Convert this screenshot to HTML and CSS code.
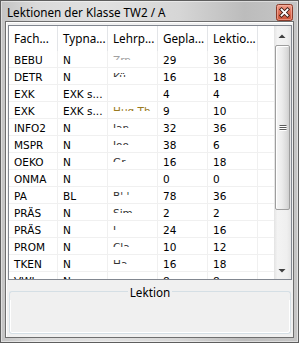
FILE: index.html
```html
<!DOCTYPE html>
<html lang="de">
<head>
<meta charset="utf-8">
<title>Lektionen der Klasse TW2 / A</title>
<link rel="stylesheet" href="styles.css">
</head>
<body>
<div class="window">
  <div class="titlebar">
    <span class="title">Lektionen der Klasse TW2 / A</span>
    <svg class="close" width="17" height="17" viewBox="0 0 17 17">
      <defs>
        <linearGradient id="cg" x1="0" y1="0" x2="0" y2="1">
          <stop offset="0" stop-color="#f0a491"/>
          <stop offset="0.45" stop-color="#e0735b"/>
          <stop offset="1" stop-color="#c94f33"/>
        </linearGradient>
      </defs>
      <rect x="0.5" y="0.5" width="16" height="16" rx="2" fill="url(#cg)" stroke="#8a3b2a"/>
      <rect x="1.5" y="1.5" width="14" height="14" rx="1.5" fill="none" stroke="#f6b8a8" stroke-opacity="0.6"/>
      <path d="M5.5 5.5 L11.5 11.5 M11.5 5.5 L5.5 11.5" stroke="#3b1a14" stroke-width="3.6" stroke-linecap="square"/>
      <path d="M5.5 5.5 L11.5 11.5 M11.5 5.5 L5.5 11.5" stroke="#ffffff" stroke-width="1.8" stroke-linecap="square"/>
    </svg>
  </div>
  <div class="client">
    <div class="list">
      <div class="grid">
        <div class="row head">
          <div class="c">Fach...</div>
          <div class="c">Typna...</div>
          <div class="c">Lehrp...</div>
          <div class="c">Gepla...</div>
          <div class="c">Lektio...</div>
          <div class="c fill"></div>
        </div>
        <div class="row"><div class="c">BEBU</div><div class="c">N</div><div class="c"><span class="mask faint">Zrn</span></div><div class="c">29</div><div class="c">36</div><div class="c fill"></div></div>
        <div class="row"><div class="c">DETR</div><div class="c">N</div><div class="c"><span class="mask">Kü</span></div><div class="c">16</div><div class="c">18</div><div class="c fill"></div></div>
        <div class="row"><div class="c">EXK</div><div class="c">EXK s...</div><div class="c"></div><div class="c">4</div><div class="c">4</div><div class="c fill"></div></div>
        <div class="row"><div class="c">EXK</div><div class="c">EXK s...</div><div class="c"><span class="mask warm">Hug Th</span></div><div class="c">9</div><div class="c">10</div><div class="c fill"></div></div>
        <div class="row"><div class="c">INFO2</div><div class="c">N</div><div class="c"><span class="mask">Jan</span></div><div class="c">32</div><div class="c">36</div><div class="c fill"></div></div>
        <div class="row"><div class="c">MSPR</div><div class="c">N</div><div class="c"><span class="mask">Joo</span></div><div class="c">38</div><div class="c">6</div><div class="c fill"></div></div>
        <div class="row"><div class="c">OEKO</div><div class="c">N</div><div class="c"><span class="mask">Gr</span></div><div class="c">16</div><div class="c">18</div><div class="c fill"></div></div>
        <div class="row"><div class="c">ONMA</div><div class="c">N</div><div class="c"></div><div class="c">0</div><div class="c">0</div><div class="c fill"></div></div>
        <div class="row"><div class="c">PA</div><div class="c">BL</div><div class="c"><span class="mask">B' '</span></div><div class="c">78</div><div class="c">36</div><div class="c fill"></div></div>
        <div class="row"><div class="c">PRÄS</div><div class="c">N</div><div class="c"><span class="mask">Sim</span></div><div class="c">2</div><div class="c">2</div><div class="c fill"></div></div>
        <div class="row"><div class="c">PRÄS</div><div class="c">N</div><div class="c"><span class="mask">L</span></div><div class="c">24</div><div class="c">16</div><div class="c fill"></div></div>
        <div class="row"><div class="c">PROM</div><div class="c">N</div><div class="c"><span class="mask">Cla</span></div><div class="c">10</div><div class="c">12</div><div class="c fill"></div></div>
        <div class="row"><div class="c">TKEN</div><div class="c">N</div><div class="c"><span class="mask">Ha</span></div><div class="c">16</div><div class="c">18</div><div class="c fill"></div></div>
        <div class="row last"><div class="c">VWL</div><div class="c">N</div><div class="c"></div><div class="c">8</div><div class="c">8</div><div class="c fill"></div></div>
      </div>
      <div class="scrollbar">
        <div class="sb-btn">
          <svg width="17" height="17" viewBox="0 0 17 17"><path d="M4.5 12 L11.5 12 L8 8.5 Z" fill="#3f3f3f"/></svg>
        </div>
        <div class="sb-track">
          <div class="thumb">
            <svg width="8" height="6" viewBox="0 0 8 6">
              <path d="M0.5 0.5 H7.5 M0.5 2.5 H7.5 M0.5 4.5 H7.5" stroke="#5a5a5a" stroke-width="1"/>
              <path d="M0.5 1.5 H7.5 M0.5 3.5 H7.5 M0.5 5.5 H7.5" stroke="#ffffff" stroke-width="1"/>
            </svg>
          </div>
        </div>
        <div class="sb-btn">
          <svg width="17" height="17" viewBox="0 0 17 17"><path d="M4.5 7 L11.5 7 L8 10.5 Z" fill="#3f3f3f"/></svg>
        </div>
      </div>
    </div>
    <div class="group">
      <div class="group-head"><span class="group-label">Lektion</span></div>
      <div class="group-body"></div>
    </div>
  </div>
</div>
</body>
</html>
```

FILE: styles.css
```css
* { box-sizing: border-box; }

html, body {
  margin: 0;
  padding: 0;
  background: #d0d0d0;
}

.window {
  width: 299px;
  height: 343px;
  display: flex;
  flex-direction: column;
  border: 1px solid #5e5e5e;
  background:
    linear-gradient(to right, #c4c4c4 0%, #dadada 12%, #e1e1e1 35%, #d6d6d6 60%, #bcbcbc 82%, #c6c6c6 100%);
  box-shadow: inset 0 0 0 1px rgba(255, 255, 255, 0.45);
}

.titlebar {
  height: 20px;
  flex: none;
  display: flex;
  align-items: flex-start;
  padding-left: 6px;
}

.title {
  flex: 1;
  font-family: "Noto Sans", sans-serif;
  font-size: 11.7px;
  line-height: 20px;
  padding-top: 1px;
  color: #000;
  white-space: nowrap;
}

.close {
  display: block;
  margin-top: 3px;
  margin-right: 5px;
}

.client {
  flex: 1;
  margin: 0 4px 4px 4px;
  border: 1px solid #6e6e6e;
  background: #f0f0f0;
  box-shadow: inset 1px 1px 0 #ffffff;
  display: flex;
  flex-direction: column;
  padding-top: 3px;
}

.list {
  height: 255px;
  flex: none;
  margin: 0 1px 0 2px;
  border: 1px solid #828790;
  background: #ffffff;
  display: flex;
}

.grid {
  width: 265px;
  height: 253px;
  overflow: hidden;
  display: flex;
  flex-direction: column;
}

.row {
  display: grid;
  grid-template-columns: 49px 50px 50px 50px 50px 16px;
  height: 17px;
  flex: none;
  border-bottom: 1px solid #f0f0f0;
}

.row.last {
  height: 7px;
  border-bottom: none;
}

.row .c {
  border-right: 1px solid #f0f0f0;
  padding: 2px 0 0 5px;
  font-family: "DejaVu Sans", sans-serif;
  font-size: 10.5px;
  line-height: 14px;
  color: #000;
  white-space: nowrap;
  overflow: hidden;
}

.row .c.fill {
  border-right: none;
}

.row.head {
  height: 25px;
  border-bottom: none;
}

.row.head .c {
  padding: 0 0 0 5px;
  font-family: "Noto Sans", sans-serif;
  font-size: 11.7px;
  line-height: 25px;
  border-right: 1px solid #e3e5e8;
}

.row.head .c.fill {
  border-right: none;
}

.mask {
  display: block;
  height: 4px;
  margin-top: 2.5px;
  overflow: hidden;
  line-height: 9px;
  color: #333333;
}

.mask.faint {
  color: #a0a0a0;
}

.mask.warm {
  color: #9a7a20;
}

.scrollbar {
  width: 17px;
  height: 253px;
  display: flex;
  flex-direction: column;
  background: linear-gradient(to right, #e3e3e3 0%, #f3f3f3 20%, #efefef 75%, #e4e4e4 100%);
}

.sb-btn {
  height: 17px;
  flex: none;
}

.sb-btn svg {
  display: block;
}

.sb-track {
  flex: 1;
  padding: 2px 1px 0 1px;
}

.thumb {
  height: 165px;
  border: 1px solid #9e9e9e;
  border-radius: 2px;
  background: linear-gradient(to right, #f6f6f6 0%, #ececec 45%, #dcdcdc 80%, #cfcfcf 100%);
  box-shadow: inset 1px 1px 0 #ffffff;
  display: flex;
  align-items: center;
  justify-content: center;
}

.thumb svg {
  display: block;
}

.group {
  flex: none;
  height: 50px;
  margin: 4px 2px 3px 3px;
  display: flex;
  flex-direction: column;
}

.group-head {
  height: 16px;
  flex: none;
  display: flex;
  align-items: flex-end;
}

.group-head::before,
.group-head::after {
  content: "";
  flex: 1;
  height: 8px;
  border-top: 1px solid #d5dfe5;
}

.group-head::before {
  border-left: 1px solid #d5dfe5;
  border-top-left-radius: 3px;
}

.group-head::after {
  border-right: 1px solid #d5dfe5;
  border-top-right-radius: 3px;
}

.group-label {
  align-self: center;
  padding: 0 2px;
  font-family: "Noto Sans", sans-serif;
  font-size: 11.7px;
  line-height: 16px;
  color: #000;
}

.group-body {
  flex: 1;
  border: 1px solid #d5dfe5;
  border-top: none;
  border-radius: 0 0 3px 3px;
  box-shadow: inset 1px 0 0 #ffffff, inset -1px -1px 0 #ffffff;
}
```
